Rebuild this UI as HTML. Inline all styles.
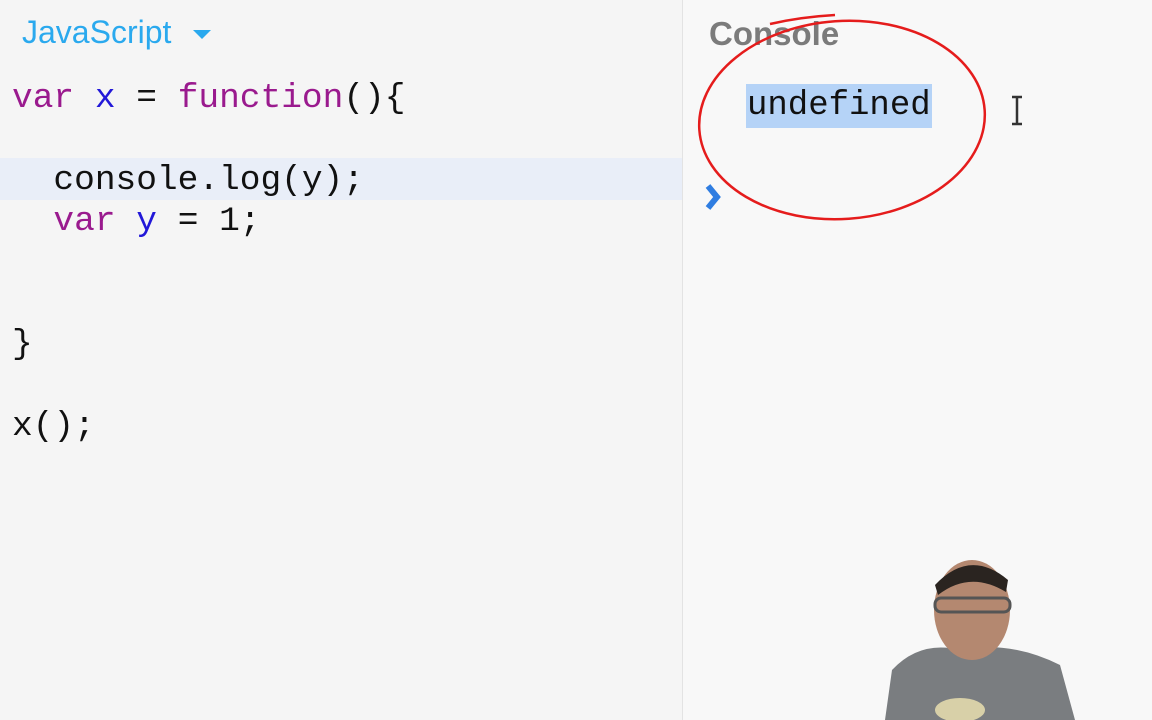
<!DOCTYPE html>
<html><head><style>
body{margin:0;width:1152px;height:720px;overflow:hidden;background:#f5f5f5;font-family:"Liberation Sans",sans-serif;position:relative}
.left{position:absolute;left:0;top:0;width:682px;height:720px;background:#f5f5f5;border-right:1px solid #e3e3e3}
.right{position:absolute;left:683px;top:0;width:469px;height:720px;background:#f8f8f8}
.lang{position:absolute;left:22px;top:14px;font-size:32px;color:#2aa9ee}
.tri{position:absolute;left:193px;top:30px;width:0;height:0;border-left:9px solid transparent;border-right:9px solid transparent;border-top:9px solid #2aa9ee}
.hl{position:absolute;left:0;top:158px;width:682px;height:42px;background:#e9eef8}
.code{position:absolute;left:12px;top:78px;font-family:"Liberation Mono",monospace;font-size:34.5px;line-height:41px;white-space:pre;color:#111}
.k{color:#9a1a8e}.v{color:#2218d8}
.ctitle{position:absolute;left:709px;top:15px;font-size:33px;font-weight:bold;color:#7b7b7b}
.und{position:absolute;left:746px;top:84px;height:44px;background:#b5d3f7;font-family:"Liberation Mono",monospace;font-size:34px;line-height:44px;padding:0 1px;color:#111}
</style></head><body>
<div class="left"></div><div class="right"></div>
<div class="hl"></div>
<div class="lang">JavaScript</div><div class="tri"></div>
<div class="code"><span class="k">var</span> <span class="v">x</span> = <span class="k">function</span>(){

  console.log(y);
  <span class="k">var</span> <span class="v">y</span> = 1;


}

x();</div>
<div class="ctitle">Console</div>
<div class="und">undefined</div>
<svg width="1152" height="720" style="position:absolute;left:0;top:0">
<path d="M708 186 l9 11 -9 11" fill="none" stroke="#2f7de1" stroke-width="6"/>
<ellipse cx="842" cy="120" rx="143" ry="99" fill="none" stroke="#e51c1c" stroke-width="2.5" transform="rotate(-4 842 120)"/>
<path d="M770 24 Q800 17 835 15" fill="none" stroke="#e51c1c" stroke-width="2.5"/>
<path d="M1012 97 h10 M1012 124 h10 M1017 97 v27" stroke="#333" stroke-width="2.5"/>
<path d="M885 720 L892 670 Q920 640 960 650 Q1010 640 1060 665 L1075 720 Z" fill="#7a7d80"/>
<ellipse cx="972" cy="610" rx="38" ry="50" fill="#b48870"/>
<path d="M935 585 Q970 548 1008 580 L1006 592 Q970 570 938 595Z" fill="#2a2420"/>
<rect x="935" y="598" width="75" height="14" rx="6" fill="none" stroke="#555" stroke-width="3"/>
<ellipse cx="960" cy="710" rx="25" ry="12" fill="#d8d0a8"/>
</svg>
</body></html>
